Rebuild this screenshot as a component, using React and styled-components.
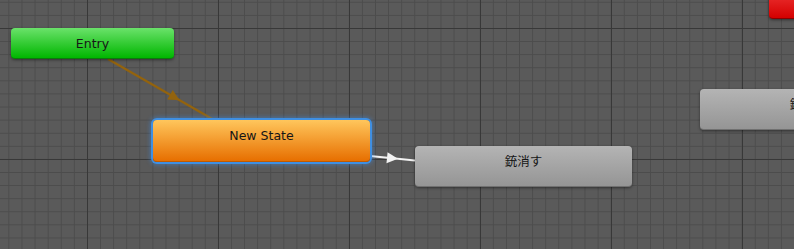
import React from 'react';
import styled, { createGlobalStyle } from 'styled-components';

const GlobalStyle = createGlobalStyle`
  html, body {
    margin: 0;
    padding: 0;
    background: #585858;
  }
`;

const Canvas = styled.div`
  position: relative;
  width: 794px;
  height: 249px;
  overflow: hidden;
  font-family: 'DejaVu Sans', 'Noto Sans CJK JP', sans-serif;
  background-color: #5a5a5a;
  background-image:
    linear-gradient(to right, #383838 1px, transparent 1px),
    linear-gradient(to bottom, #383838 1px, transparent 1px),
    linear-gradient(to right, #4c4c4c 1px, transparent 1px),
    linear-gradient(to bottom, #4c4c4c 1px, transparent 1px);
  background-size: 131px 131px, 131px 131px, 13.1px 13.1px, 13.1px 13.1px;
  background-position: 87px 0, 0 28px, 8.4px 0, 0 1.8px;
`;

const Node = styled.div`
  position: absolute;
  left: ${p => p.$x}px;
  top: ${p => p.$y}px;
  width: ${p => p.$w || 217}px;
  height: ${p => p.$h || 42}px;
  box-sizing: border-box;
  border-radius: 4px;
  padding-top: 9px;
  background: linear-gradient(to bottom, ${p => p.$top}, ${p => p.$bottom});
  border-bottom: 1px solid ${p => p.$edge};
  box-shadow: ${p =>
    p.$selected
      ? '0 0 0 2px #3f8fe2, 0 0 4px 3px rgba(60, 140, 230, 0.45)'
      : '0 1px 3px rgba(0, 0, 0, 0.45)'};
  color: #161616;
  font-size: 12.5px;
  line-height: 14px;
  text-align: center;
  white-space: nowrap;
`;

const Wires = styled.svg`
  position: absolute;
  left: 0;
  top: 0;
  width: 794px;
  height: 249px;
  pointer-events: none;
`;

const Arrow = ({ x1, y1, x2, y2, color, pos = 0.5, size = 10 }) => {
  const dx = x2 - x1;
  const dy = y2 - y1;
  const len = Math.hypot(dx, dy);
  const ux = dx / len;
  const uy = dy / len;
  const cx = x1 + dx * pos;
  const cy = y1 + dy * pos;
  const half = size / 2;
  const tip = [cx + ux * half, cy + uy * half];
  const a = [cx - ux * half - uy * half, cy - uy * half + ux * half];
  const b = [cx - ux * half + uy * half, cy - uy * half - ux * half];
  return (
    <g>
      <line x1={x1} y1={y1} x2={x2} y2={y2} stroke={color} strokeWidth="2.2" />
      <polygon points={`${tip.join(',')} ${a.join(',')} ${b.join(',')}`} fill={color} />
    </g>
  );
};

export default function App() {
  return (
    <>
      <GlobalStyle />
      <Canvas>
        <Wires viewBox="0 0 794 249">
          <Arrow x1={108} y1={59} x2={214} y2={120} color="#93630d" pos={0.63} size={11} />
          <Arrow x1={370} y1={156} x2={415} y2={160.5} color="#f2f2f2" pos={0.5} size={11} />
        </Wires>

        <Node $x={11} $y={28} $w={163} $h={31} $top="#6ae26a" $bottom="#00b600" $edge="#0b7a0b">
          Entry
        </Node>

        <Node $x={153} $y={120} $h={42} $top="#ffc65c" $bottom="#e76f00" $edge="#c05a00" $selected>
          New State
        </Node>

        <Node $x={415} $y={146} $h={41} $top="#b4b4b4" $bottom="#959595" $edge="#707070">
          銃消す
        </Node>

        <Node $x={700} $y={89} $h={41} $top="#b4b4b4" $bottom="#959595" $edge="#707070">
          銃出す
        </Node>

        <Node $x={769} $y={-12} $w={120} $h={31} $top="#f03a3a" $bottom="#d40000" $edge="#8a0000" />
      </Canvas>
    </>
  );
}
